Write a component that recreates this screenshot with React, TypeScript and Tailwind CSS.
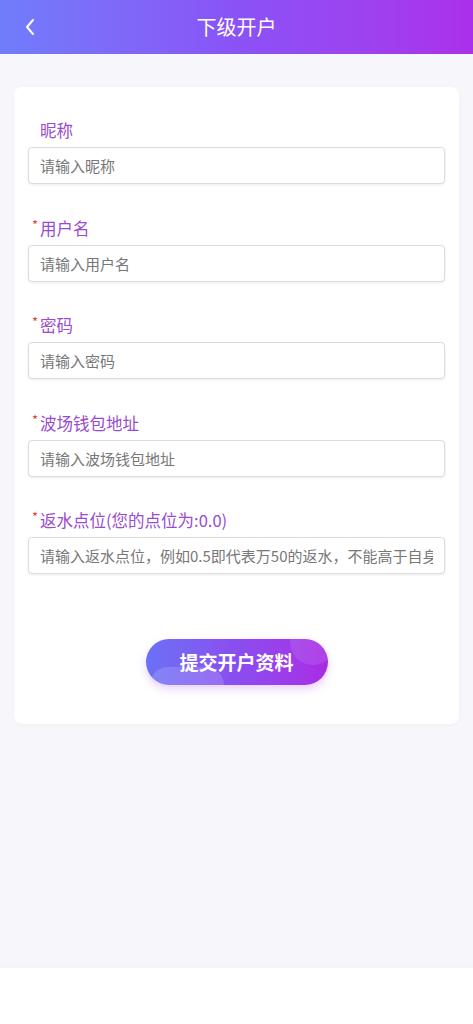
import React from "react";

const fields = [
  { label: "昵称", req: false, ph: "请输入昵称" },
  { label: "用户名", req: true, ph: "请输入用户名" },
  { label: "密码", req: true, ph: "请输入密码" },
  { label: "波场钱包地址", req: true, ph: "请输入波场钱包地址" },
  { label: "返水点位(您的点位为:0.0)", req: true, ph: "请输入返水点位，例如0.5即代表万50的返水，不能高于自身点位" },
];

export default function App() {
  return (
    <div
      className="flex h-[1024px] w-full flex-col overflow-hidden bg-white"
      style={{ fontFamily: '"Noto Sans CJK SC", "Noto Sans", "Liberation Sans", sans-serif' }}
    >
      <header className="relative flex h-[54px] shrink-0 items-center justify-center bg-gradient-to-r from-[#6f7dfb] via-[#8a52f6] to-[#ab2fea]">
        <button className="absolute left-[22px] top-[17px] flex h-[20px] w-[16px] items-center justify-center">
          <svg width="12" height="18" viewBox="0 0 12 18" fill="none">
            <path d="M9 2 L3 9 L9 16" stroke="white" strokeWidth="2" strokeLinecap="round" strokeLinejoin="round" />
          </svg>
        </button>
        <h1 className="text-[20px] leading-none text-white">下级开户</h1>
      </header>
      <main className="flex-1 bg-[#f6f6fb] px-[14px] pt-[33px]">
        <div className="rounded-[8px] bg-white px-[14px] pb-[39px] pt-[32px] shadow-[0_1px_4px_rgba(0,0,0,0.03)]">
          {fields.map((f, i) => (
            <div key={i} className={i === 0 ? "" : "mt-[32.5px]"}>
              <div className="flex h-[22px] items-center pl-[12px] text-[16.5px] leading-[22px] text-[#9a4bcf]">
                <span className="relative">
                  {f.req && (
                    <span className="absolute -left-[8px] -top-[3px] text-[13px] text-[#e0453a]">*</span>
                  )}
                  {f.label}
                </span>
              </div>
              <input
                readOnly
                placeholder={f.ph}
                className="mt-[6px] block h-[37px] w-full rounded-[4px] border border-[#dcdcdc] bg-white px-[11px] text-[15px] shadow-[0_1px_3px_rgba(0,0,0,0.08)] outline-none placeholder:text-[#777]"
              />
            </div>
          ))}
          <div className="mt-[65px] flex justify-center">
            <button className="relative h-[46px] w-[182px] overflow-hidden rounded-full bg-gradient-to-r from-[#6a70f6] via-[#8a4df0] to-[#a92ae4] shadow-[0_4px_8px_rgba(190,120,250,0.35)]">
              <span className="absolute -bottom-[18px] left-[4px] h-[36px] w-[74px] rounded-full bg-white/15" />
              <span className="absolute -right-[8px] -top-[20px] h-[46px] w-[46px] rounded-full bg-white/10" />
              <span className="relative text-[19px] font-bold text-white">提交开户资料</span>
            </button>
          </div>
        </div>
      </main>
      <footer className="h-[56px] shrink-0 bg-white shadow-[0_-3px_6px_rgba(0,0,0,0.02)]" />
    </div>
  );
}
